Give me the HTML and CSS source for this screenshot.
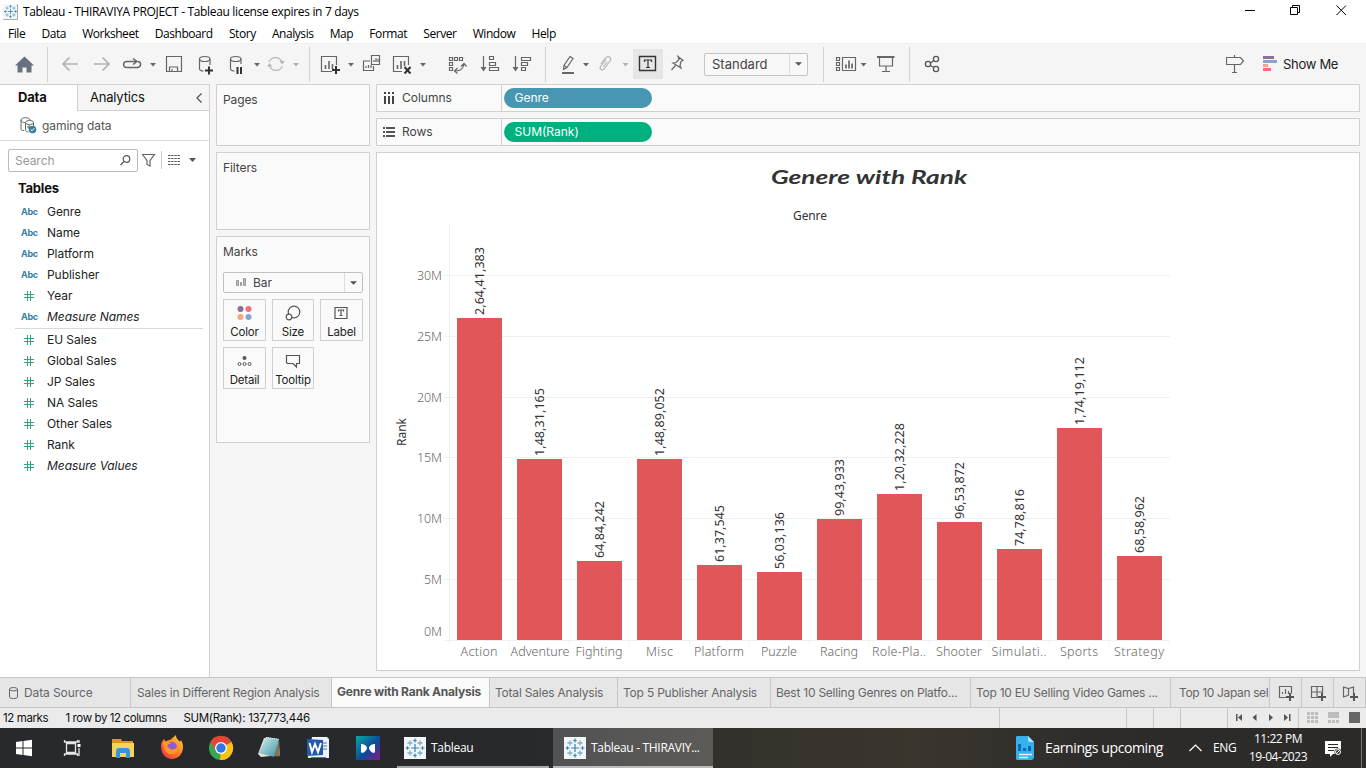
FILE: index.html
```html
<!DOCTYPE html>
<html lang="en">
<head>
<meta charset="utf-8">
<title>Tableau - THIRAVIYA PROJECT</title>
<link rel="stylesheet" href="styles.css">
</head>
<body>
<svg class="defs" width="0" height="0">
  <symbol id="logo" viewBox="0 0 22 22">
    <path fill="#f4f5f6" d="M0 0h22v22H0z"/>
    <g fill="none" stroke="#3d84ad" stroke-width="1.2"><path d="M11 7v8M7 11h8"/><path d="M11 1.5v4M9.2 3.5h3.6M11 16.5v4M9.2 18.5h3.6M1.5 11h4M3.5 9.2v3.6M16.5 11h4M18.5 9.2v3.6"/></g>
    <g fill="none" stroke="#77aed0" stroke-width="1.3"><path d="M6 3.5v5M3.5 6h5M16 3.5v5M13.5 6h5M6 13.500v5M3.500 16h5M16 13.500v5M13.500 16h5"/></g>
  </symbol>
  <symbol id="hash" viewBox="0 0 10 10"><path d="M3.500 0v10M6.500 0v10M0 3.500h10M0 6.500h10" fill="none" stroke="#35a37c"/></symbol>
  <symbol id="caret" viewBox="0 0 8 4"><path d="M0 0h8L4 4z" fill="#555"/></symbol>
</svg>

<header class="titlebar">
  <svg class="title-icon" width="15" height="16"><use href="#logo" width="15" height="15"/><path d="M0 15.500h14.500V0" fill="none" stroke="#aaa"/></svg>
  <span class="win-title">Tableau - THIRAVIYA PROJECT - Tableau license expires in 7 days</span>
  <svg class="win-controls" width="121" height="23" viewBox="1245 0 121 23" fill="none" stroke="#000">
    <path d="M1245 10.500h10M1290.500 7.500h7v7h-7zM1292.500 7.500v-2h7v7h-2M1336.500 5.500l9.500 9.500M1346 5.500l-9.500 9.500"/>
  </svg>
</header>

<nav class="menubar">
  <span>File</span><span>Data</span><span>Worksheet</span><span>Dashboard</span><span>Story</span><span>Analysis</span><span>Map</span><span>Format</span><span>Server</span><span>Window</span><span>Help</span>
</nav>

<div class="toolbar">
  <svg width="47" height="41" viewBox="0 43 47 41"><path d="M24.500 56.500l9.500 9h-2.500v7h-5v-5h-4v5h-5v-7H15z" fill="#697180"/></svg>
  <i class="sep"></i>
  <svg width="261" height="41" viewBox="48 43 261 41" fill="none" stroke="#666" stroke-width="1.200">
    <g stroke="#b3b3b3" stroke-width="1.700"><path d="M78 64H63M69.500 57.500L63 64l6.500 6.500M94 64h15M102.500 57.500L109 64l-6.500 6.500"/></g>
    <path d="M136 67.500h2c3.500-1 3.500-5.500 0-6M136 67.500h-9c-4.500 0-4.500-6 0-6h9M133 58.500l4 3-4 3" stroke-width="1.500"/>
    <path d="M150 63h6l-3 3.500zM254 63h6l-3 3.500z" fill="#666" stroke="none"/>
    <path d="M166.500 56.500h15v15h-15zM169.500 71v-4h8v4M172 71v-2"/>
    <path d="M199.500 59v10c0 1 2 2 4 2M210 59v6"/><ellipse cx="204.700" cy="59" rx="5.200" ry="2.500"/><path d="M205 70.500h8M209 66.500v8" stroke="#333" stroke-width="2"/>
    <path d="M230.500 59v10c0 1 2 2 4 2M241 59v5"/><ellipse cx="235.700" cy="59" rx="5.200" ry="2.500"/><path d="M237.500 67v7M241 67v7" stroke="#333" stroke-width="2"/>
    <g stroke="#b7b7b7"><path d="M269 62a7 7 0 0 1 13 0M282.500 66a7 7 0 0 1-13 0"/><path d="M279.500 61h5.500l-3 3.500zM267 66.500h5.500l-3-3.500z" fill="#b7b7b7" stroke="none"/></g>
    <path d="M293 63h6l-3 3.500z" fill="#b3b3b3" stroke="none"/>
  </svg>
  <i class="sep"></i>
  <svg width="235" height="41" viewBox="310 43 235 41" fill="none" stroke="#666" stroke-width="1.200">
    <path d="M332 71.500h-10.500v-15h15V65"/><path d="M325.500 69v-4M329 69v-8M332.500 69v-5" stroke-width="1.600"/><path d="M332 70h8M336 66v8" stroke="#333" stroke-width="2"/>
    <path d="M348 63h6l-3 3.500zM420 63h6l-3 3.500z" fill="#666" stroke="none"/>
    <path d="M371.500 55.500h8v9h-8zM370 61h-6.500v9.500h10V66"/><path d="M374 62v-2M376 62v-4M378 62v-3M366 68v-2M368.500 68v-3M371 68v-3"/>
    <path d="M402 71.500h-8.500v-15h15V65"/><path d="M397.500 69v-4M401 69v-8M404.500 66v-5" stroke-width="1.600"/><path d="M404.500 67l6 6.500M410.500 67l-6 6.500" stroke="#333" stroke-width="2"/>
    <path d="M449.500 57.500h3v3h-3zM454.500 57.500h3v3h-3zM459.500 57.500h3v3h-3zM449.500 62.500h3v3h-3zM449.500 67.500h3v3h-3zM455 71c6 0 8-2 9-7M457.500 68l-3 3 3 2.500M461 66.500l3-3 2.500 3"/>
    <path d="M483.500 56v14M489.500 56.500h4v3h-4zM489.500 62.500h6v3h-6zM489.500 67.500h9v3h-9zM515.500 56v14M521.500 57.500h9v3h-9zM521.500 62.500h6v3h-6zM521.500 67.500h4v3h-4z"/><path d="M480.500 67h6l-3 4.500zM512.500 67h6l-3 4.500z" fill="#666" stroke="none"/>
  </svg>
  <i class="sep"></i>
  <svg width="158" height="41" viewBox="546 43 158 41" fill="none" stroke="#666" stroke-width="1.200">
    <path d="M570 56.500l3 2-6 9-3.500 2 .5-4zM564 65.500l3 2"/><path d="M562 73h12" stroke-width="2"/>
    <path d="M583 63h6l-3 3.500z" fill="#666" stroke="none"/>
    <path d="M601 64l4.500-6c3-3 7 0 4.500 3l-6 8c-2 2-5 0-3.500-2.500l5.500-7M603 67l4-5" stroke="#b7b7b7"/>
    <path d="M622.500 63h6l-3 3.500z" fill="#b3b3b3" stroke="none"/>
    <path fill="#e6e6e6" stroke="none" d="M633 49h30v30h-30z"/><path d="M639.500 56.500h16v14h-16z" stroke="#333" stroke-width="1.400"/><path d="M644.500 62v-2h7v2M648 60v7.500M646 67.500h4" stroke="#333"/>
    <path d="M678 56.500l5 4-2 1-1 4 1 2.500-8-5 3-.5 3-3zM675.500 65.500L671.500 70"/>
  </svg>
  <div class="select"><span>Standard</span><b><svg width="7" height="4"><use href="#caret" width="7" height="4"/></svg></b></div>
  <i class="sep sep-select"></i>
  <svg width="85" height="41" viewBox="824 43 85 41" fill="none" stroke="#666" stroke-width="1.200">
    <path d="M836.500 57.500h3v3h-3zM836.500 62.500h3v3h-3zM836.500 67.500h3v3h-3zM842.500 57.500h13v13h-13z"/><path d="M846 68.500v-4M849 68.500v-8M852 68.500v-5" stroke-width="1.700"/>
    <path d="M860.500 63h6l-3 3.500z" fill="#666" stroke="none"/><path d="M879.500 57v9h13v-9M886 66v5M882 71.500h8"/><path d="M877 57h17.500" stroke-width="2"/>
  </svg>
  <i class="sep"></i>
  <svg width="40" height="41" viewBox="910 43 40 41" fill="none" stroke="#555" stroke-width="1.300"><circle cx="928" cy="64" r="2.600"/><circle cx="936" cy="59" r="2.600"/><circle cx="936" cy="69" r="2.600"/><path d="M930.500 63l3.500-2.500M930.500 65.500l3.500 2"/></svg>
  <svg class="guide" width="55" height="41" viewBox="1226 43 55 41"><path d="M1226.500 57.500h14l3 3.500-3 3.500h-14zM1234.500 55v2.500M1234.500 65v7M1232 72.500h5" fill="none" stroke="#666" stroke-width="1.200"/><path fill="#8e6f9a" d="M1263 56h11v3h-11z"/><path fill="#84a5cd" d="M1263 60h14v3h-14z"/><path fill="#f5a582" d="M1263 64h5v3h-5z"/><path fill="#f76c7c" d="M1263 68h8v3h-8z"/></svg>
  <span class="showme">Show Me</span>
</div>

<main class="workspace">
  <aside class="data-pane">
    <div class="pane-tabs"><b>Data</b><div><span>Analytics</span><svg width="6" height="10" fill="none" stroke="#555" stroke-width="1.300"><path d="M5.500.5L1 5l4.500 4.500"/></svg></div></div>
    <div class="source">
      <svg width="17" height="17" fill="none" stroke="#666"><path d="M1 3v9c0 1 1 1.500 3 1.500M1 3c0-3 9-3 9 0M1 3c0 2 2 2.500 4 2.500"/><ellipse cx="9.500" cy="5.500" rx="4" ry="2"/><path d="M5.500 6v7c0 1 1 2 3 2M13.500 6v3M7 10h4M9 8v4"/><circle cx="12.500" cy="12.500" r="3.800" fill="#357f9f" stroke="none"/><path d="M10.700 12.500l1.300 1.300 2.300-2.600" stroke="#fff"/></svg>
      <span>gaming data</span>
    </div>
    <div class="search-row">
      <div class="search"><span>Search</span><svg width="11" height="11" fill="none" stroke="#555" stroke-width="1.200"><circle cx="6.500" cy="4" r="3.300"/><path d="M4 6.500L.5 10"/></svg></div>
      <svg width="58" height="20" viewBox="142 150 58 20" fill="none" stroke="#666"><path d="M142.500 153.500h12l-4.500 6v5.500l-3-1.500v-4z" stroke-width="1.200"/><path d="M161.500 150v18" stroke="#ccc"/><path d="M168 154.500h12M168 157.500h12M168 160.500h12M168 163.500h12" stroke="#555" stroke-dasharray="2.400 .8"/><path d="M189 157h7l-3.500 4z" fill="#555" stroke="none"/></svg>
    </div>
    <h2>Tables</h2>
    <ul class="fields">
      <li><i>Abc</i><span>Genre</span></li>
      <li><i>Abc</i><span>Name</span></li>
      <li><i>Abc</i><span>Platform</span></li>
      <li><i>Abc</i><span>Publisher</span></li>
      <li><i><svg width="10" height="10"><use href="#hash"/></svg></i><span>Year</span></li>
      <li><i>Abc</i><em>Measure Names</em></li>
    </ul>
    <ul class="fields measures">
      <li><i><svg width="10" height="10"><use href="#hash"/></svg></i><span>EU Sales</span></li>
      <li><i><svg width="10" height="10"><use href="#hash"/></svg></i><span>Global Sales</span></li>
      <li><i><svg width="10" height="10"><use href="#hash"/></svg></i><span>JP Sales</span></li>
      <li><i><svg width="10" height="10"><use href="#hash"/></svg></i><span>NA Sales</span></li>
      <li><i><svg width="10" height="10"><use href="#hash"/></svg></i><span>Other Sales</span></li>
      <li><i><svg width="10" height="10"><use href="#hash"/></svg></i><span>Rank</span></li>
      <li><i><svg width="10" height="10"><use href="#hash"/></svg></i><em>Measure Values</em></li>
    </ul>
  </aside>

  <section class="cards">
    <div class="card pages">Pages</div>
    <div class="card filters">Filters</div>
    <div class="card marks">
      <div>Marks</div>
      <div class="mark-type"><svg width="10" height="10" fill="#bbb" stroke="#999"><path d="M.5 2.500h2v5h-2zM4.500 4.500h1v3h-1zM7.500.5h2v7h-2z"/></svg><span>Bar</span><b><svg width="7" height="4"><use href="#caret" width="7" height="4"/></svg></b></div>
      <div class="mark-grid">
        <div><svg width="16" height="16"><circle cx="3.500" cy="4" r="3" fill="#8a6d98"/><circle cx="11.500" cy="4" r="3" fill="#f76c7c"/><circle cx="3.500" cy="12" r="3" fill="#f5a67d"/><circle cx="11.500" cy="12" r="3" fill="#84a5cd"/></svg>Color</div>
        <div><svg width="16" height="16" fill="#fafafa" stroke="#555" stroke-width="1.200"><circle cx="9" cy="7" r="5.800"/><circle cx="4" cy="12" r="2.800"/></svg>Size</div>
        <div><svg width="16" height="16" fill="none" stroke="#555" stroke-width="1.200"><path d="M1 2.500h12v11H1zM4.500 6.500V5h5v1.500M7 5v5.500M5.500 10.500h3"/></svg>Label</div>
        <div><svg width="16" height="16" fill="none" stroke="#555"><circle cx="7.500" cy="5" r="2" fill="#555" stroke="none"/><circle cx="2.500" cy="11" r="1.500"/><circle cx="7.500" cy="11" r="1.500"/><circle cx="12.500" cy="11" r="1.500"/></svg>Detail</div>
        <div><svg width="16" height="16" fill="none" stroke="#555" stroke-width="1.200"><path d="M1.500 2.500h13v8h-3V14L8 10.500H2.500l-1-1z"/></svg>Tooltip</div>
      </div>
    </div>
  </section>

  <section class="view">
    <div class="shelf"><div class="shelf-name"><svg width="11" height="12" fill="#444"><path d="M0 0h2v2H0zM4 0h2v2H4zM8 0h2v2H8zM0 4h2v8H0zM4 4h2v8H4zM8 4h2v8H8z"/></svg>Columns</div><div class="pill dim">Genre</div></div>
    <div class="shelf"><div class="shelf-name rows"><svg width="12" height="10" fill="#555"><path d="M0 0h2v2H0zM0 4h2v2H0zM0 8h2v2H0zM3 0h9v2H3zM3 4h9v2H3zM3 8h9v2H3z"/></svg>Rows</div><div class="pill mea">SUM(Rank)</div></div>
    <div class="sheet">
      <svg class="chart" width="982" height="517" viewBox="377 153 982 517">
        <text class="chart-title" x="771" y="184" textLength="196" lengthAdjust="spacingAndGlyphs">Genere with Rank</text>
        <text class="field-label" x="793" y="220" textLength="34">Genre</text>
        <text class="field-label" transform="translate(406 446) rotate(-90)" textLength="28">Rank</text>
        <path class="grid" d="M444 275.500h726M444 336.500h726M444 397.500h726M444 457.500h726M444 518.500h726M444 579.500h726M444 640.500h726M449.500 225v419M509.500 640v4M569.500 640v4M629.500 640v4M689.500 640v4M749.500 640v4M809.500 640v4M869.500 640v4M929.500 640v4M989.500 640v4M1049.500 640v4M1109.500 640v4M1169.500 640v4"/>
        <g class="axis">
          <text x="417" y="280" textLength="25">30M</text><text x="417" y="341" textLength="25">25M</text><text x="417" y="402" textLength="25">20M</text><text x="417" y="462" textLength="25">15M</text><text x="417" y="523" textLength="25">10M</text><text x="424" y="584" textLength="18">5M</text><text x="424" y="636" textLength="18">0M</text>
        </g>
        <path class="bars" d="M457 318h45v322h-45zM517 459h45v181h-45zM577 561h45v79h-45zM637 459h45v181h-45zM697 565h45v75h-45zM757 572h45v68h-45zM817 519h45v121h-45zM877 494h45v146h-45zM937 522h45v118h-45zM997 549h45v91h-45zM1057 428h45v212h-45zM1117 556h45v84h-45z"/>
        <g class="values">
          <text transform="translate(484 315) rotate(-90)" textLength="68">2,64,41,383</text>
          <text transform="translate(544 456) rotate(-90)" textLength="68">1,48,31,165</text>
          <text transform="translate(604 558) rotate(-90)" textLength="57">64,84,242</text>
          <text transform="translate(664 456) rotate(-90)" textLength="68">1,48,89,052</text>
          <text transform="translate(724 562) rotate(-90)" textLength="57">61,37,545</text>
          <text transform="translate(784 569) rotate(-90)" textLength="57">56,03,136</text>
          <text transform="translate(844 516) rotate(-90)" textLength="57">99,43,933</text>
          <text transform="translate(904 491) rotate(-90)" textLength="68">1,20,32,228</text>
          <text transform="translate(964 519) rotate(-90)" textLength="57">96,53,872</text>
          <text transform="translate(1024 546) rotate(-90)" textLength="57">74,78,816</text>
          <text transform="translate(1084 425) rotate(-90)" textLength="68">1,74,19,112</text>
          <text transform="translate(1144 553) rotate(-90)" textLength="57">68,58,962</text>
        </g>
        <g class="axis">
          <text x="460.500" y="656" textLength="37">Action</text><text x="510.500" y="656" textLength="59">Adventure</text><text x="575.500" y="656" textLength="47">Fighting</text><text x="646" y="656" textLength="27">Misc</text><text x="694" y="656" textLength="50">Platform</text><text x="761" y="656" textLength="36">Puzzle</text><text x="820" y="656" textLength="38">Racing</text><text x="872" y="656" textLength="54">Role-Pla..</text><text x="936" y="656" textLength="46">Shooter</text><text x="991.500" y="656" textLength="55">Simulati..</text><text x="1060" y="656" textLength="38">Sports</text><text x="1114" y="656" textLength="50">Strategy</text>
        </g>
      </svg>
    </div>
  </section>
</main>

<div class="tabs">
  <div class="tab t1"><svg width="9" height="12" fill="none" stroke="#666"><path d="M.5 2v8c0 2 8 2 8 0V2"/><ellipse cx="4.500" cy="2.200" rx="4" ry="1.700"/></svg><span>Data Source</span></div>
  <div class="tab t2"><span>Sales in Different Region Analysis</span></div>
  <div class="tab t3 active"><span>Genre with Rank Analysis</span></div>
  <div class="tab t4"><span>Total Sales Analysis</span></div>
  <div class="tab t5"><span>Top 5 Publisher Analysis</span></div>
  <div class="tab t6"><span>Best 10 Selling Genres on Platfo...</span></div>
  <div class="tab t7"><span>Top 10 EU Selling Video Games ...</span></div>
  <div class="tab t8"><span>Top 10 Japan sel</span></div>
  <svg width="96" height="29" viewBox="1270 678 96 29" fill="none" stroke="#666" stroke-width="1.200">
    <path d="M1301.500 678v29M1333.500 678v29M1365.500 678v29" stroke="#c6c6c6" stroke-width="1"/>
    <path d="M1288 697.500h-8.500v-11h12v7M1282.500 694v-2M1285.500 694v-5M1288.500 694v-3M1319 697.500h-7.500v-11h11v7M1317 686.500v11M1311.500 692h11M1349 695l-5.500 2v-10l5 1.500 5-1.500v7M1348.500 688.500v7"/><path d="M1286 697h8M1290 693v8M1318 697h8M1322 693v8M1350 697h8M1354 693v8" stroke="#555" stroke-width="2"/>
  </svg>
</div>

<footer class="status">
  <span class="s1">12 marks</span><span class="s2">1 row by 12 columns</span><span class="s3">SUM(Rank): 137,773,446</span>
  <svg width="367" height="20" viewBox="999 708 367 20">
    <path d="M999.500 708v20M1126.500 708v20M1153.500 708v20M1180.500 708v20M1227.500 708v20M1298.500 708v20" stroke="#c6c6c6"/>
    <path fill="#555" d="M1236 714h1.500v7h-1.500zM1242 714v7l-4-3.500zM1256.500 714v7l-4-3.500zM1269 714v7l4-3.500zM1284 714v7l4-3.500zM1289 714h1.500v7h-1.500z"/>
    <path fill="#bdbdbd" d="M1307 712h3v3h-3zM1311 712h3v3h-3zM1315 712h3v3h-3zM1307 716h3v3h-3zM1311 716h3v3h-3zM1315 716h3v3h-3zM1307 720h3v3h-3zM1311 720h3v3h-3zM1315 720h3v3h-3zM1328 712h11v6h-11zM1328 720h3v3h-3zM1332 720h3v3h-3zM1336 720h3v3h-3z"/><path fill="#666" d="M1349 712h11v11h-11z"/>
  </svg>
</footer>

<div class="taskbar">
  <svg width="397" height="40" viewBox="0 728 397 40">
    <defs>
      <linearGradient id="fx" x1="1" y1="0" x2="0" y2="1"><stop offset="0" stop-color="#ffd83a"/><stop offset=".5" stop-color="#ff7b22"/><stop offset="1" stop-color="#e8274f"/></linearGradient>
      <linearGradient id="np" x1="0" y1="0" x2="1" y2="1"><stop offset="0" stop-color="#d5f0f2"/><stop offset="1" stop-color="#3d93a4"/></linearGradient>
      <linearGradient id="bx" x1="0" y1="0" x2="1" y2="1"><stop offset="0" stop-color="#08aaa0"/><stop offset=".55" stop-color="#0c4a9c"/><stop offset="1" stop-color="#8b1a80"/></linearGradient>
    </defs>
    <path fill="#fff" d="M16 742l6.500-1v6.500H16zM23.500 741l8.500-1.200v7.700h-8.500zM16 748.500h6.500v6.500l-6.500-1zM23.500 748.500H32v7.700l-8.500-1.200z"/>
    <path fill="none" stroke="#e6e6e6" stroke-width="1.300" d="M66.500 743.500h9v9h-9zM64.500 740v2h13v-2M64.500 756v-2h13v2M79 740v3M79 748v8"/><path fill="#fff" d="M77.500 744h3v3h-3z"/>
    <path fill="#d99a13" d="M112 739h9l1 2h11v4h-21z"/><path fill="#fbd058" d="M112 743h22v14h-22z"/><path fill="#3993d9" d="M116 758v-6q0-4 3-4h8q3 0 3 4v6h-4v-5h-6v5z"/>
    <path fill="url(#fx)" d="M161 746c0-4 2-6 3-7l2 3c1-2 3-2 4-2l6-5c0 4 2 4 4 7l1-2c1 2 2 4 2 7 0 7-5 12-11 12s-11-5-11-13z"/><circle cx="172" cy="747" r="5" fill="#9059d8"/><path fill="#ff9827" d="M163 742c4-2 7 0 8 2-4 0-5 2-2 4 3 3 7 1 8-1 1 5-3 8-7 7-4 0-7-5-7-12z"/>
    <circle cx="221" cy="748" r="12" fill="#36a852"/><path fill="#e74436" d="M221 748l-10.500-6a12 12 0 0 1 21 0z"/><path fill="#fbc116" d="M221 748l10.500-6A12 12 0 0 1 220 760z"/><path fill="#e74436" d="M210.500 742h21H221l-5 9z"/><circle cx="221" cy="748" r="6" fill="#fff"/><circle cx="221" cy="748" r="4.700" fill="#2f79e6"/>
    <path fill="#e9e4d4" d="M264 738l14 1 2 16-19 2-3-3z"/><path fill="url(#np)" d="M266 737l13 2-5 18-15-4z"/><path fill="#7d755f" d="M279 739l1 17-3 .5-3-1z"/><path stroke="#ecf4f4" stroke-dasharray="1 1" d="M266 737.500l13 2"/>
    <path fill="#eef3fb" d="M312 737h15l2 2v19h-21v-2z"/><path fill="#2359ad" d="M307 739l16 1v15l-16 1z"/><path stroke="#4b79bd" d="M323 743h4M323 746h4M323 749h4M311 757.500h15"/><path fill="none" stroke="#fff" stroke-width="2" d="M309.500 743l2.500 9 3-8 3 8 3-9"/>
    <path fill="url(#bx)" d="M356 736h24v24h-24z"/><path fill="#fff" d="M361 744c3 0 6 2 6 4s-3 5-5 5l-1-1zM375 744c-3 0-6 2-6 4s3 5 5 5l1-1z"/>
  </svg>
  <div class="task"><svg width="22" height="22"><use href="#logo"/></svg><span>Tableau</span></div>
  <div class="task current"><svg width="22" height="22"><use href="#logo"/></svg><span>Tableau - THIRAVIY...</span></div>
  <div class="tray">
    <svg width="18" height="24"><path fill="#35b2ee" d="M1 0h11l6 6v16l-2 2H1l-1-1V1z"/><path fill="#aee2fb" d="M12 0l6 6h-5l-1-1z"/><path fill="#1167b4" d="M2 8h3v7H2zM7 12h3v3H7zM12 10h3v5h-3z"/><path stroke="#dff4ff" stroke-width="1.500" d="M3 18.500h13M3 21.500h9"/></svg>
    <span class="news">Earnings upcoming</span>
    <svg class="up" width="13" height="8" fill="none" stroke="#fff" stroke-width="1.200"><path d="M.5 7l6-6 6 6"/></svg>
    <span class="lang">ENG</span>
    <div class="clock"><span>11:22 PM</span><span>19-04-2023</span></div>
    <svg class="notice" width="17" height="17"><path fill="#fff" d="M0 1h16v13H8l-3 3v-3H0z"/><path stroke="#2b2a29" d="M3 4.500h10M3 7.500h10M3 10.500h6"/><circle cx="13" cy="12" r="3.500" fill="#2b2a29"/><circle cx="13" cy="12" r="2.500" fill="none" stroke="#fff"/><path stroke="#fff" d="M11 14l4-4"/></svg>
    <i class="desktop"></i>
  </div>
</div>
</body>
</html>
```

FILE: styles.css
```css
* { box-sizing: border-box; }
body { margin: 0; width: 1366px; height: 768px; overflow: hidden; display: flex; flex-direction: column; background: #f5f5f5; font: 12px/16px Inter, "Liberation Sans", sans-serif; color: #333; }
svg { display: block; flex: none; }
.defs { position: absolute; }
span, b, em { white-space: nowrap; }

.titlebar, .menubar, .taskbar { font-family: "Open Sans", "Noto Sans", sans-serif; color: #000; }
.titlebar { height: 23px; background: #fff; display: flex; align-items: center; padding-left: 3px; }
.win-title { margin-left: 5px; letter-spacing: -.33px; }
.win-controls { margin-left: auto; }
.menubar { height: 20px; background: #fff; display: flex; gap: 16.200px; padding: 3px 0 0 8px; letter-spacing: -.44px; }

.toolbar { height: 41px; border-top: 1px solid #eee; display: flex; align-items: center; }
.toolbar > svg { margin-top: -1px; }
.sep { width: 1px; height: 35px; background: #d0d0d0; flex: none; }
.select { width: 104px; height: 23px; border: 1px solid #c4c4c4; border-radius: 2px; display: flex; align-items: center; justify-content: space-between; font-size: 13px; padding-left: 7px; color: #444; background: #f8f8f8; }
.select b, .mark-type b { width: 18px; align-self: stretch; display: flex; align-items: center; justify-content: center; border-left: 1px solid #ddd; }
.sep-select { margin-left: 15px; }
.guide { margin-left: 276px; }
.showme { font-size: 13px; letter-spacing: -.3px; margin-left: 2px; color: #222; }

.workspace { height: 593px; display: flex; }
.data-pane { width: 210px; background: #fff; border: 1px solid #d0d0d0; border-left: 0; border-bottom: 0; letter-spacing: -.06px; }
.pane-tabs { height: 26px; display: flex; font-size: 13px; line-height: 25px; color: #111; letter-spacing: -.2px; }
.pane-tabs b { width: 77px; padding-left: 18px; }
.pane-tabs div { flex: 1; background: #f5f5f5; border: 1px solid #d0d0d0; border-width: 0 0 1px 1px; display: flex; align-items: center; justify-content: space-between; padding: 0 7px 0 12px; }
.source { height: 30px; border-bottom: 1px solid #ddd; display: flex; align-items: center; padding-left: 20px; gap: 5px; color: #555; }
.search-row { display: flex; align-items: center; padding: 8px 0 0 8px; gap: 4px; }
.search { width: 130px; height: 23px; border: 1px solid #bbb; border-radius: 2px; display: flex; align-items: center; justify-content: space-between; padding: 0 6px; color: #999; }
h2 { margin: 7px 0 4px 18px; font: bold 13px/18px Inter, sans-serif; letter-spacing: -.2px; color: #111; }
.fields { list-style: none; margin: 0; padding: 0; color: #222; }
.fields li { height: 21px; display: flex; align-items: center; }
.fields i { width: 26px; margin-left: 21px; font: bold 9px/12px Inter, sans-serif; letter-spacing: -.3px; color: #357f9f; }
.fields i svg { margin-left: 3px; }
.measures { margin: 0 6px 0 0; }
.measures::before { content: ""; display: block; height: 1px; margin: 1px 0 0 15px; background: #d8d8d8; }

.cards { width: 154px; margin-left: 6px; display: flex; flex-direction: column; gap: 6px; }
.card { border: 1px solid #d0d0d0; background: #fafafa; padding: 7px 6px; color: #444; letter-spacing: -.1px; }
.pages { height: 62px; }
.filters { height: 78px; }
.marks { height: 207px; }
.mark-type { width: 140px; height: 21px; margin-top: 12px; border: 1px solid #c0c0c0; border-radius: 2px; display: flex; align-items: center; padding-left: 12px; gap: 7px; }
.mark-type b { margin-left: auto; }
.mark-grid { margin-top: 6px; display: grid; grid-template-columns: 43px 42px 43px; gap: 6px; }
.mark-grid div { height: 42px; border: 1px solid #d0d0d0; display: flex; flex-direction: column; align-items: center; justify-content: space-between; padding: 5px 0 0; font-size: 11.500px; line-height: 16px; letter-spacing: -.2px; color: #222; }

.view { width: 984px; margin-left: 6px; display: flex; flex-direction: column; gap: 6px; }
.shelf { height: 28px; border: 1px solid #d0d0d0; background: #fafafa; display: flex; align-items: center; }
.shelf-name { width: 125px; height: 26px; border-right: 1px solid #d0d0d0; display: flex; align-items: center; padding-left: 7px; gap: 7px; color: #444; }
.rows { padding-left: 6px; }
.pill { width: 148px; height: 20px; margin-left: 2px; border-radius: 10px; padding: 2px 0 0 10.500px; color: #fff; }
.dim { background: #4996b2; }
.mea { background: #00b180; }
.sheet { height: 519px; border: 1px solid #d0d0d0; background: #fff; }
.chart { font-family: "Noto Sans", "Open Sans", sans-serif; }
.chart-title { font: italic bold 19px "Segoe Print", "Bradley Hand", Lato, cursive; fill: #333; }
.field-label { font-size: 12px; fill: #333; }
.grid { stroke: #f0f0f0; fill: none; }
.axis { font-size: 12.500px; font-weight: 300; fill: #666; }
.values { font-size: 12.500px; fill: #333; }
.bars { fill: #e15759; }

.tabs { height: 31px; background: #e6e6e6; border: 1px solid #c6c6c6; border-width: 1px 0; display: flex; color: #666; letter-spacing: -.21px; }
.tab { border-right: 1px solid #c6c6c6; display: flex; align-items: center; padding-left: 6px; overflow: hidden; flex: none; }
.active { background: #fafafa; font-weight: bold; color: #555; }
.t1 { width: 131px; padding-left: 9px; gap: 6px; letter-spacing: -.1px; }
.t2 { width: 201px; }
.t3 { width: 158px; padding: 0 0 2px 5px; }
.t4 { width: 128px; padding-left: 5px; }
.t5 { width: 153px; padding-left: 5px; }
.t6 { width: 200px; padding-left: 5px; letter-spacing: -.24px; }
.t7 { width: 200px; padding-left: 5px; letter-spacing: -.27px; }
.t8 { width: 99px; padding-left: 8px; letter-spacing: -.36px; }

.status { height: 20px; background: #ebebeb; display: flex; font-size: 11.500px; line-height: 20px; color: #111; padding-left: 3px; letter-spacing: -.4px; }
.status svg { margin-left: auto; }
.s1 { width: 62.500px; }
.s2 { width: 118px; }
.s3 { letter-spacing: -.32px; }

.taskbar { height: 40px; background: linear-gradient(90deg, #27292c 0, #27292c 39%, #34312c 53%, #3a352d 67%, #2e2c2b 80%, #2b2a29); display: flex; color: #fff; }
.task { width: 152px; display: flex; align-items: center; padding: 2px 0 0 7px; gap: 5px; border-bottom: 2px solid #aaa; letter-spacing: -.3px; }
.current { width: 160px; margin-left: 4px; padding-left: 11px; background: linear-gradient(90deg, #515254, #5d5b57); border-color: #bbb; }
.tray { flex: 1; display: flex; align-items: center; padding-left: 303px; }
.news { width: 119px; margin-left: 11px; font-size: 14px; letter-spacing: -.4px; }
.up { margin-left: 25px; }
.lang { width: 24px; margin-left: 11px; letter-spacing: -.3px; }
.clock { width: 62px; margin-left: 10px; display: flex; flex-direction: column; align-items: center; line-height: 18px; letter-spacing: -.45px; }
.notice { margin-left: 16px; }
.desktop { width: 1px; height: 40px; background: #777; margin-left: auto; margin-right: 4px; }
```
